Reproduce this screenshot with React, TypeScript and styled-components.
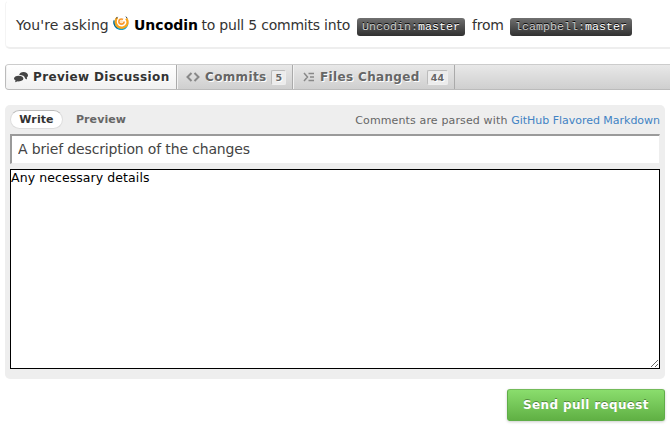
import React from "react";
import styled, { createGlobalStyle } from "styled-components";

const Global = createGlobalStyle`
  * { box-sizing: border-box; }
  body { margin: 0; background: #fff; overflow: hidden; font-family: "DejaVu Sans", sans-serif; }
`;

const Page = styled.main`
  width: 670px;
  height: 426px;
  padding-left: 5px;
  overflow: hidden;
`;

const Summary = styled.header`
  display: flex;
  align-items: center;
  width: 690px;
  height: 49px;
  padding: 2px 10px 0 10px;
  border: 1px solid #f4f4f4;
  border-top-color: #fff;
  border-bottom: 2px solid #eee;
  border-radius: 5px;
  font-size: 14px;
  color: #333;
  white-space: pre;
`;

const Phrase = styled.span<{ $width: number; $spacing?: number; $indent?: number }>`
  width: ${(p) => p.$width}px;
  padding-left: ${(p) => p.$indent ?? 0}px;
  letter-spacing: ${(p) => p.$spacing ?? 0}px;
`;

const Owner = styled.strong`
  width: 67px;
  color: #000;
`;

const Avatar = styled.svg`
  width: 16px;
  height: 16px;
  margin: -5px 5px 0 0;
`;

const Branch = styled.code<{ $width: number }>`
  width: ${(p) => p.$width}px;
  height: 18px;
  margin-top: 4px;
  padding-left: 5px;
  border-radius: 3px;
  background: linear-gradient(#707070, #303030);
  font: 11.67px/18px "Liberation Mono", monospace;
  color: #ccc;
  text-shadow: 0 -1px 0 #000;
`;

const BranchName = styled.span`
  color: #fff;
`;

const Tabs = styled.nav`
  display: flex;
  width: 690px;
  height: 26px;
  margin-top: 15px;
  border: 1px solid #bbb;
  border-top-color: #ccc;
  border-radius: 4px;
  background: linear-gradient(#e8e8e8, #cfcfcf);
  overflow: hidden;
`;

const Tab = styled.a<{ $width: number; $active?: boolean }>`
  display: flex;
  align-items: center;
  width: ${(p) => p.$width}px;
  padding-left: ${(p) => (p.$active ? 8 : 9)}px;
  border-right: 1px solid #aaa;
  box-shadow: inset 1px 0 0 #f2f2f2;
  background: ${(p) => (p.$active ? "linear-gradient(#fff, #f1f1f1)" : "transparent")};
  color: ${(p) => (p.$active ? "#333" : "#666")};
  font-size: 12px;
  font-weight: bold;
  letter-spacing: 0.35px;
  text-shadow: 1px 1px 0 #fff;
  white-space: nowrap;

  svg {
    flex: none;
    margin-right: 5px;
  }
`;

const Count = styled.span`
  height: 15px;
  margin: 0 6px 0 auto;
  padding: 0 3px;
  border: 1px solid #bbb;
  border-right-color: #eee;
  border-bottom-color: #eee;
  border-radius: 2px;
  background: #ececec;
  font-size: 9.5px;
  letter-spacing: 0;
  line-height: 13px;
`;

const Composer = styled.section`
  width: 660px;
  height: 274px;
  margin-top: 15px;
  padding: 5px;
  border-radius: 5px;
  background: #eee;
`;

const ComposerBar = styled.div`
  display: flex;
  align-items: center;
  height: 19px;
  font-size: 11px;
`;

const Mode = styled.button<{ $active?: boolean }>`
  width: ${(p) => (p.$active ? 53 : 76)}px;
  height: 19px;
  padding: 0;
  border: 1px solid ${(p) => (p.$active ? "#ddd" : "transparent")};
  border-top-color: ${(p) => (p.$active ? "#bbb" : "transparent")};
  border-radius: 10px;
  background: ${(p) => (p.$active ? "#fff" : "transparent")};
  color: ${(p) => (p.$active ? "#333" : "#666")};
  font: bold 11px/16px "DejaVu Sans", sans-serif;
  letter-spacing: 0.1px;
`;

const Hint = styled.p`
  margin: 1px 0 0 auto;
  color: #666;
  font-size: 11px;
  letter-spacing: 0.14px;
  white-space: nowrap;
`;

const Link = styled.a`
  color: #4183c4;
  letter-spacing: -0.02px;
`;

const TitleInput = styled.input`
  display: block;
  width: 650px;
  height: 30px;
  margin-top: 5px;
  padding: 0 6px 2px;
  border: 2px solid #9a9a9a;
  border-right: 1px solid #eee;
  border-bottom: 1px solid #eee;
  border-radius: 0;
  outline: 0;
  background: #fff;
  color: #444;
  font: 14px "DejaVu Sans", sans-serif;
  letter-spacing: -0.15px;
`;

const Details = styled.textarea`
  display: block;
  width: 650px;
  height: 200px;
  margin-top: 5px;
  padding: 0;
  border: 1px solid #000;
  border-radius: 0;
  outline: 0;
  background: #fff;
  color: #000;
  font: 12.5px/15px "DejaVu Sans", sans-serif;
  letter-spacing: 0.08px;
`;

const Submit = styled.button`
  display: block;
  width: 158px;
  height: 32px;
  margin: 10px 0 0 502px;
  padding: 0;
  border: 1px solid #5fad48;
  border-top-color: #74bb5a;
  border-radius: 3px;
  background: linear-gradient(#8add6d, #60b044);
  box-shadow: 0 1px 3px rgba(0, 0, 0, 0.2);
  color: #fff;
  font: bold 12px/28px "DejaVu Sans", sans-serif;
  letter-spacing: 0.35px;
  text-shadow: 0 -1px 0 rgba(0, 0, 0, 0.35);
`;

function BubblesIcon() {
  return (
    <svg width="14" height="12" viewBox="0 0 14 12" fill="#444">
      <path d="M9.5 1C12 1 14 2.3 14 4.3c0 1-.5 1.8-1.2 2.3l.3 2-2-1.2C10.500 5 8.500 4 5.200 4.100 5.500 2.300 7.300 1 9.500 1Z" />
      <path d="M4.700 4.800c2.700 0 4.700 1.100 4.700 2.800S7.400 10.400 4.700 10.400l-.8-.1L1 11.200l.6-1.700C.6 9 0 8.400 0 7.600 0 5.900 2 4.800 4.700 4.800Z" />
    </svg>
  );
}

function CodeIcon() {
  return (
    <svg width="14" height="10" viewBox="0 0 14 10" fill="none" stroke="#888" strokeWidth="2">
      <path d="M5.500 1 1.500 5l4 4M8.500 1l4 4-4 4" />
    </svg>
  );
}

function DiffIcon() {
  return (
    <svg width="13" height="10" viewBox="0 0 13 10" fill="none" stroke="#888" strokeWidth="1.500">
      <path d="m2 1 3.500 4L2 9M6.500 1.500H12M8 5h4M6.500 8.500H12" />
    </svg>
  );
}

function AvatarMark() {
  return (
    <Avatar viewBox="0 0 16 16" fill="none">
      <path d="M1 4.500C-1 10 3 15 8.300 15c4.200 0 7.200-3.400 7-7.500L12 11H4Z" fill="#12a4d0" />
      <path d="M1 5.500C.3 9.500 2 12 4.500 13.500" stroke="#07577f" strokeWidth="1" />
      <circle cx="8.300" cy="7" r="5.600" fill="#fff" />
      <path d="M4.300 2.500C1.800 5.300 2.200 9.800 5.300 11.800c3.300 2 7.500.6 8.800-2.600.8-2 .4-4.200-.9-5.800" stroke="#f9a51b" strokeWidth="2.300" />
      <path d="M3.100 3.600 4.600 1.900M12.900 1.600l1.300 1.700" stroke="#34485a" strokeWidth="1" />
      <circle cx="8.500" cy="6.600" r="2.600" stroke="#fa9a30" strokeWidth="1.700" strokeDasharray="13.500 3" />
      <circle cx="8.300" cy="6.600" r="1.500" fill="#ffe3b8" />
    </Avatar>
  );
}

export default function App() {
  return (
    <>
      <Global />
      <Page>
        <Summary>
          <Phrase $width={97} $spacing={0.05}>You're asking</Phrase>
          <AvatarMark />
          <Owner>Uncodin</Owner>
          <Phrase $width={156} $spacing={-0.22} $indent={0.5}>to pull 5 commits into</Phrase>
          <Branch $width={108}>Uncodin:<BranchName>master</BranchName></Branch>
          <Phrase $width={45} $spacing={-0.25} $indent={7}>from</Phrase>
          <Branch $width={122}>lcampbell:<BranchName>master</BranchName></Branch>
        </Summary>
        <Tabs>
          <Tab $width={171} $active><BubblesIcon />Preview Discussion</Tab>
          <Tab $width={116}><CodeIcon />Commits<Count>5</Count></Tab>
          <Tab $width={162}><DiffIcon />Files Changed<Count>44</Count></Tab>
        </Tabs>
        <Composer>
          <ComposerBar>
            <Mode $active>Write</Mode>
            <Mode>Preview</Mode>
            <Hint>Comments are parsed with <Link>GitHub Flavored Markdown</Link></Hint>
          </ComposerBar>
          <TitleInput defaultValue="A brief description of the changes" />
          <Details defaultValue="Any necessary details" />
        </Composer>
        <Submit>Send pull request</Submit>
      </Page>
    </>
  );
}
